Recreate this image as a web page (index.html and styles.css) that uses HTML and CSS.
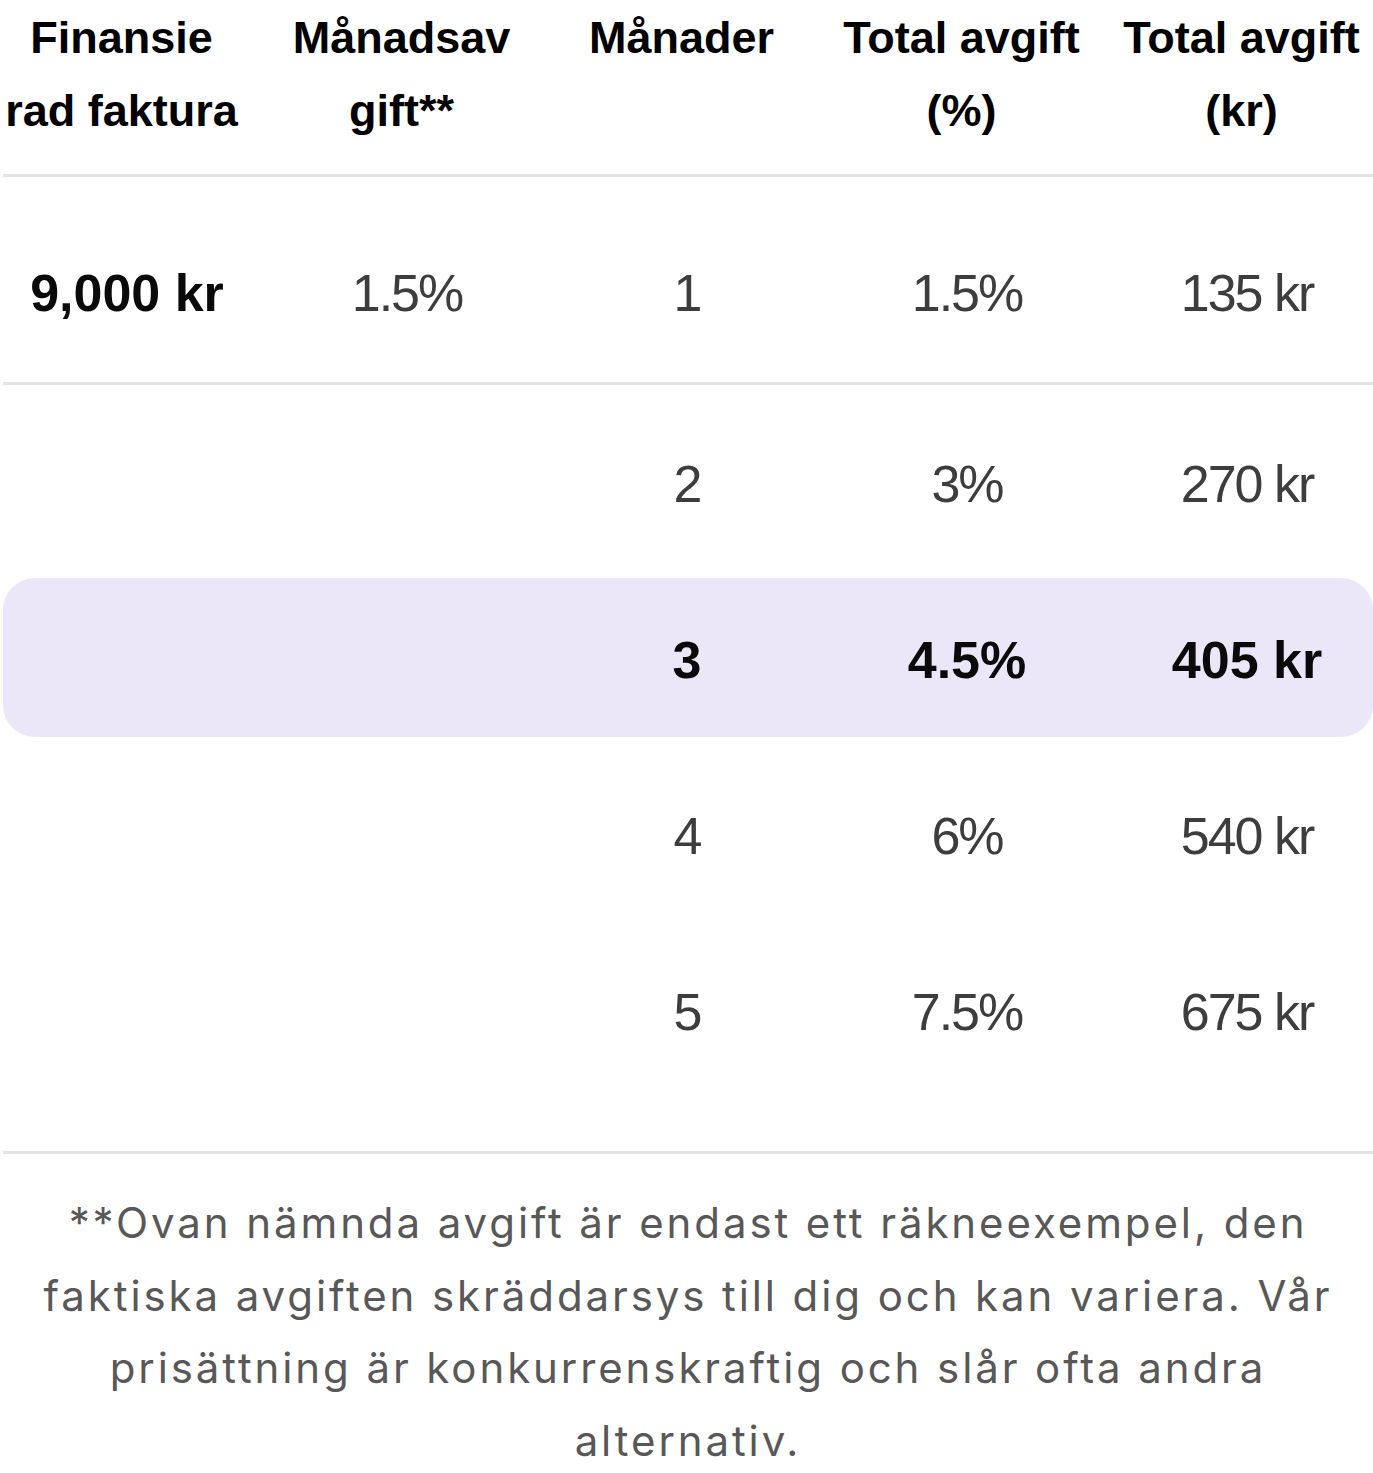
FILE: index.html
```html
<!DOCTYPE html>
<html lang="sv">
<head>
<meta charset="utf-8">
<title>Finansierad faktura</title>
<link rel="stylesheet" href="styles.css">
</head>
<body>
<div class="page">
  <div class="table">
    <div class="thead">
      <div class="grid">
        <div class="th">Finansie<br>rad faktura</div>
        <div class="th">Månadsav<br>gift**</div>
        <div class="th">Månader</div>
        <div class="th">Total avgift<br>(%)</div>
        <div class="th">Total avgift<br>(kr)</div>
      </div>
    </div>
    <div class="first">
      <div class="grid">
        <div class="td strong">9,000 kr</div>
        <div class="td">1.5%</div>
        <div class="td">1</div>
        <div class="td">1.5%</div>
        <div class="td">135 kr</div>
      </div>
    </div>
    <div class="tbody">
      <div class="tr">
        <div class="grid">
          <div class="td"></div>
          <div class="td"></div>
          <div class="td">2</div>
          <div class="td">3%</div>
          <div class="td">270 kr</div>
        </div>
      </div>
      <div class="tr selected">
        <div class="grid">
          <div class="td"></div>
          <div class="td"></div>
          <div class="td strong">3</div>
          <div class="td strong">4.5%</div>
          <div class="td strong">405 kr</div>
        </div>
      </div>
      <div class="tr">
        <div class="grid">
          <div class="td"></div>
          <div class="td"></div>
          <div class="td">4</div>
          <div class="td">6%</div>
          <div class="td">540 kr</div>
        </div>
      </div>
      <div class="tr">
        <div class="grid">
          <div class="td"></div>
          <div class="td"></div>
          <div class="td">5</div>
          <div class="td">7.5%</div>
          <div class="td">675 kr</div>
        </div>
      </div>
    </div>
  </div>
  <p class="note">**Ovan nämnda avgift är endast ett räkneexempel, den faktiska avgiften skräddarsys till dig och kan variera. Vår prisättning är konkurrenskraftig och slår ofta andra alternativ.</p>
</div>
</body>
</html>
```
FILE: styles.css
```css
html, body {
  margin: 0;
  padding: 0;
  background: #ffffff;
  overflow: hidden;
}

body {
  font-family: "Liberation Sans", Arial, sans-serif;
  color: #000000;
}

.page {
  padding-left: 3px;
  width: 1370px;
}

.table {
  width: 1370px;
}

.grid {
  display: grid;
  grid-template-columns: repeat(5, 280px);
  width: 1400px;
  margin-left: -16px;
}

.thead {
  padding-top: 1px;
  padding-bottom: 27px;
  border-bottom: 3px solid #e3e3e3;
}

.th {
  font-weight: 700;
  font-size: 45px;
  line-height: 73px;
  text-align: center;
  padding: 0 23px 0 12px;
  color: #000000;
}

.td {
  font-size: 52px;
  line-height: 60px;
  text-align: center;
  color: #3d3d3d;
  letter-spacing: -2px;
}

.td.strong {
  font-weight: 700;
  color: #0a0a0a;
  letter-spacing: 0;
}

.first {
  padding-top: 86px;
  padding-bottom: 59px;
  border-bottom: 3px solid #e3e3e3;
}

.tbody {
  display: flex;
  flex-direction: column;
  gap: 17px;
  padding-top: 17px;
  padding-bottom: 62px;
  border-bottom: 3px solid #e3e3e3;
}

.tr {
  height: 159px;
  display: flex;
  align-items: center;
  border-radius: 32px;
}

.tr .grid {
  padding-top: 4px;
}

.tr.selected {
  background: #ebe7f8;
}

.note {
  margin: 0;
  padding: 33px 28px 0;
  font-family: Inter, "Liberation Sans", Arial, sans-serif;
  font-size: 42px;
  line-height: 72.5px;
  letter-spacing: 2.9px;
  text-align: center;
  color: #585858;
}
```
